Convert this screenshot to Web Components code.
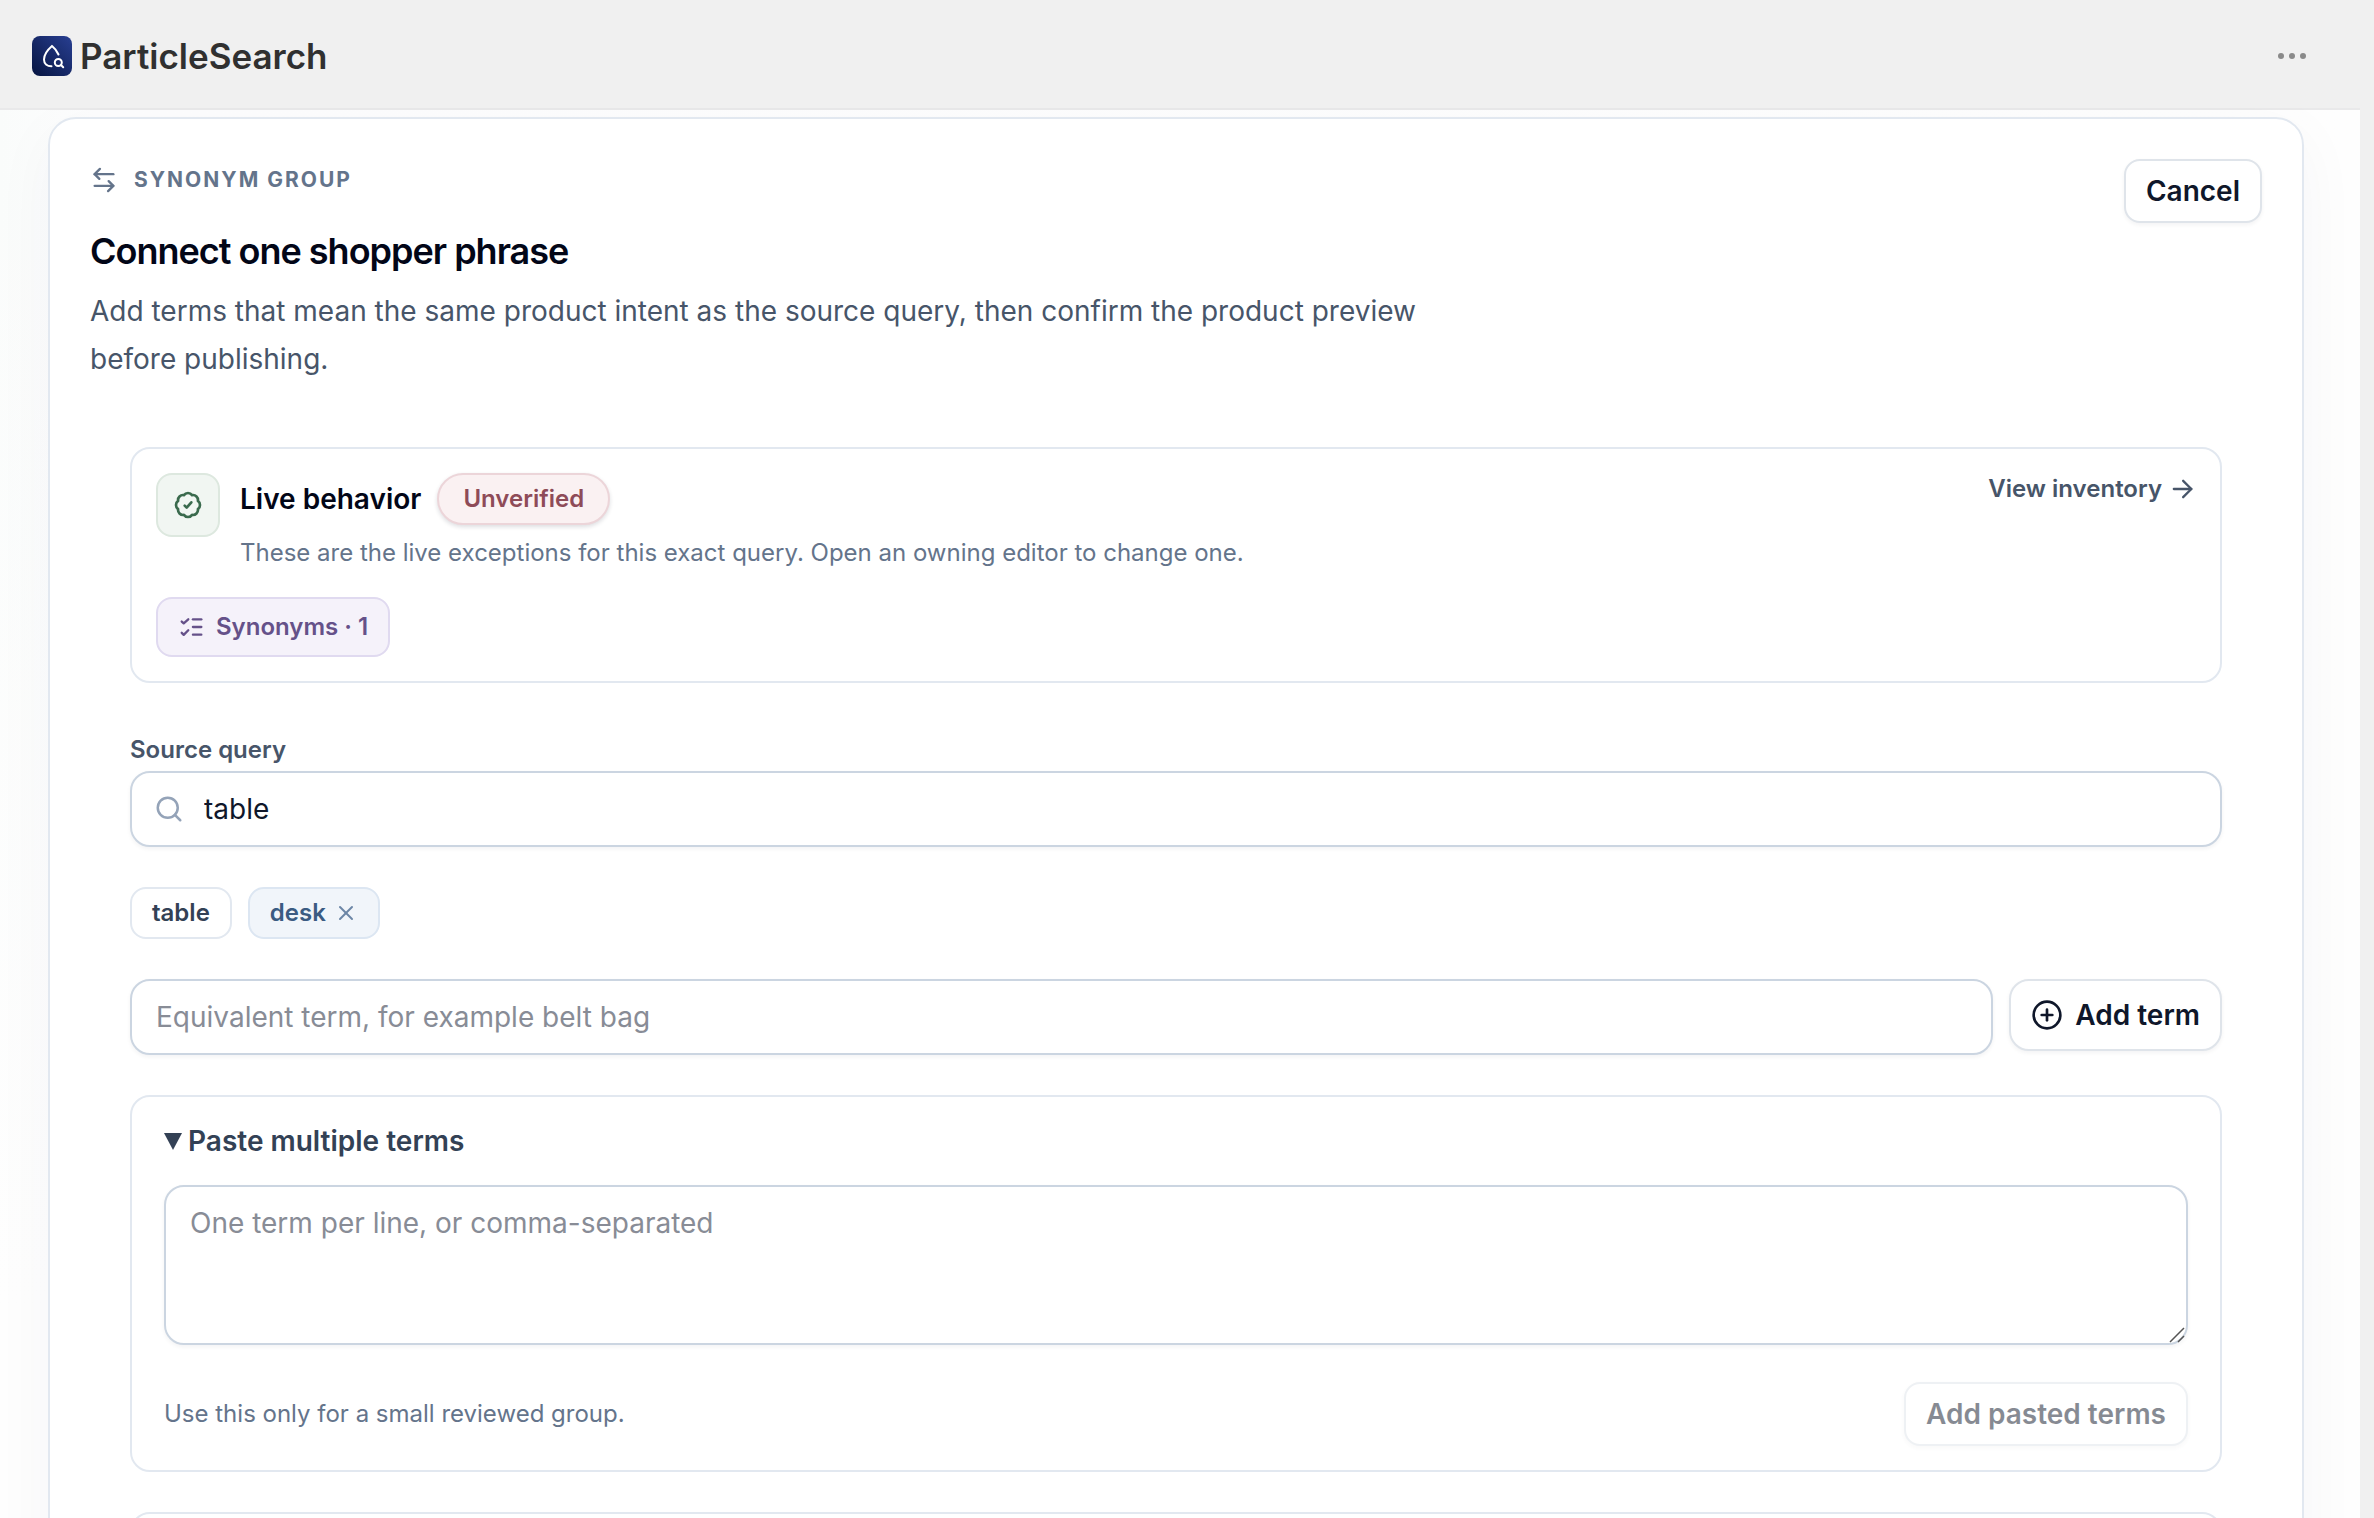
<!DOCTYPE html>
<html lang="en">
<head>
<meta charset="utf-8">
<title>ParticleSearch</title>
<style>
    html { background: #f0f0f0; }
    body {
        margin: 0;
        min-height: 100vh;
        overflow: hidden;
        font-family: Inter, "Liberation Sans", sans-serif;
        font-size: 28px;
        color: #0f172a;
        --line: #e2e8f0;
        --field-line: #cbd5e1;
        --muted: #64748b;
        --body: #475569;
        --strong: #334155;
    }
</style>
</head>
<body>
<app-shell>
    <synonym-editor></synonym-editor>
</app-shell>

<script>
const ICONS = {
    swap: '<path d="M8.500 2.500 4 7l4 4"/><path d="M4 7h16"/><path d="m15.500 21.500 4.500-4.500-4-4"/><path d="M20 17H4"/>',
    badge: '<path d="M21 12c0 1.268-.63 2.39-1.593 3.068a3.745 3.745 0 0 1-1.043 3.296 3.745 3.745 0 0 1-3.296 1.043A3.745 3.745 0 0 1 12 21c-1.268 0-2.39-.63-3.068-1.593a3.746 3.746 0 0 1-3.296-1.043 3.745 3.745 0 0 1-1.043-3.296A3.745 3.745 0 0 1 3 12c0-1.268.63-2.39 1.593-3.068a3.745 3.745 0 0 1 1.043-3.296 3.746 3.746 0 0 1 3.296-1.043A3.746 3.746 0 0 1 12 3c1.268 0 2.39.63 3.068 1.593a3.746 3.746 0 0 1 3.296 1.043 3.746 3.746 0 0 1 1.043 3.296A3.745 3.745 0 0 1 21 12Z"/><path d="m9.500 12.500 1.500 1.500 3.500-4"/>',
    arrow: '<path d="M5 12h15"/><path d="m13 5 7 7-7 7"/>',
    checks: '<path d="m3.200 7.300 1.700 1.500L8.800 5.400"/><path d="m3.200 17 1.700 1.700 3.900-3.900"/><path d="M12.800 5.400h7.200"/><path d="M12.800 12h7.200"/><path d="M12.800 18.600h7.200"/>',
    search: '<circle cx="11" cy="11" r="8"/><path d="m21 21-4.3-4.3"/>',
    close: '<path d="M18 6 6 18"/><path d="m6 6 12 12"/>',
    plus: '<circle cx="12" cy="12" r="10"/><path d="M8 12h8"/><path d="M12 8v8"/>'
};

function define(name, html) {
    const template = document.createElement('template');
    template.innerHTML = html;
    customElements.define(name, class extends HTMLElement {
        constructor() {
            super();
            this.attachShadow({ mode: 'open' }).appendChild(template.content.cloneNode(true));
        }
    });
}

class UiIcon extends HTMLElement {
    constructor() {
        super();
        this.attachShadow({ mode: 'open' });
    }
    connectedCallback() {
        const size = this.getAttribute('size') || 28;
        this.shadowRoot.innerHTML = `
            <style>
                :host { display: block; flex: none; }
                svg { display: block; }
            </style>
            <svg width="${size}" height="${size}" viewBox="0 0 24 24" fill="none" stroke="currentColor"
                stroke-width="2" stroke-linecap="round" stroke-linejoin="round" aria-hidden="true">
                ${ICONS[this.getAttribute('name')]}
            </svg>`;
    }
}
customElements.define('ui-icon', UiIcon);

class UiButton extends HTMLElement {
    constructor() {
        super();
        this.attachShadow({ mode: 'open' });
        this.shadowRoot.innerHTML = `
            <style>
                :host { display: block; flex: none; }
                button {
                    display: flex;
                    align-items: center;
                    gap: 12px;
                    height: 64px;
                    padding: 0 20px;
                    border: 2px solid #dfe4ea;
                    border-radius: 16px;
                    background: #fff;
                    box-shadow: 0 2px 4px rgba(15, 23, 42, 0.05);
                    font: 600 28px/40px Inter, sans-serif;
                    color: #0f172a;
                    white-space: nowrap;
                }
                :host([large]) button { height: 72px; border-radius: 20px; }
                button:disabled { opacity: 0.5; }
            </style>
            <button type="button"><slot></slot></button>`;
        this.shadowRoot.querySelector('button').disabled = this.hasAttribute('disabled');
    }
}
customElements.define('ui-button', UiButton);

define('ui-panel', `
    <style>
        :host {
            display: block;
            border: 2px solid var(--line);
            border-radius: 20px;
            padding: 24px;
            background: #fff;
        }
    </style>
    <slot></slot>
`);

define('ui-badge', `
    <style>
        :host {
            display: block;
            border: 2px solid #ecd5d9;
            border-radius: 26px;
            padding: 0 24px;
            background: #faf1f2;
            color: #8e4b58;
            font-size: 24px;
            font-weight: 600;
            line-height: 48px;
            box-shadow: 0 2px 4px rgba(15, 23, 42, 0.14);
        }
    </style>
    <slot></slot>
`);

define('term-chip', `
    <style>
        :host {
            display: flex;
            align-items: center;
            gap: 8px;
            border: 2px solid var(--line);
            border-radius: 16px;
            padding: 0 20px;
            background: #fff;
            color: var(--strong);
            font-size: 24px;
            font-weight: 600;
            line-height: 48px;
        }
        :host([tone="blue"]) {
            border-color: #dce6f2;
            background: #f1f5fa;
            color: #3b5b82;
        }
        :host([tone="violet"]) {
            gap: 10px;
            border-color: #e0daf0;
            background: #f5f2fa;
            color: #655189;
            line-height: 56px;
        }
    </style>
    <slot></slot>
`);

define('app-header', `
    <style>
        :host {
            display: flex;
            align-items: center;
            justify-content: space-between;
            height: 108px;
            box-sizing: border-box;
            padding: 4px 67px 0 32px;
            background: #f0f0f0;
        }
        .brand {
            display: flex;
            align-items: center;
            gap: 8px;
            color: #303030;
            font-size: 35px;
            font-weight: 600;
            line-height: 48px;
            text-decoration: none;
        }
        svg { display: block; }
        button {
            border: 0;
            padding: 0;
            background: none;
            color: #8a8a8a;
        }
    </style>
    <a class="brand" href="#">
        <svg width="40" height="40" viewBox="0 0 40 40" aria-hidden="true">
            <defs>
                <linearGradient id="tile" x1="0" y1="1" x2="1" y2="0">
                    <stop offset="0" stop-color="#061440"/>
                    <stop offset="1" stop-color="#283f92"/>
                </linearGradient>
            </defs>
            <rect width="40" height="40" rx="8" fill="url(#tile)"/>
            <g fill="none" stroke="#fff" stroke-width="2" stroke-linecap="round">
                <path d="M26.500 18.500C25 15 22.500 12 20 10C16 13.500 12 18.500 12 23.500C12 27.500 15 30.300 19.500 30.300"/>
                <circle cx="26.300" cy="26.500" r="3.500"/>
                <path d="m29 29 2.200 2.200"/>
            </g>
        </svg>
        <span>ParticleSearch</span>
    </a>
    <button type="button" aria-label="More actions">
        <svg width="30" height="8" viewBox="0 0 30 8" fill="currentColor">
            <circle cx="4" cy="4" r="3"/><circle cx="15" cy="4" r="3"/><circle cx="26" cy="4" r="3"/>
        </svg>
    </button>
`);

define('app-shell', `
    <style>
        :host { display: block; }
        app-header { position: relative; z-index: 1; }
        main {
            margin-right: 14px;
            padding: 7px 56px 0 48px;
            border-top: 2px solid #e9e9ea;
            background:
                linear-gradient(180deg, transparent, #fefefe 1200px),
                linear-gradient(90deg, #fafcfb, #fdfdfe 96px, #fefefe);
        }
    </style>
    <app-header></app-header>
    <main><slot></slot></main>
`);

define('live-behavior', `
    <style>
        :host { display: block; }
        .top { display: flex; align-items: flex-start; gap: 20px; }
        .tile {
            flex: none;
            display: grid;
            place-items: center;
            width: 60px;
            height: 60px;
            border: 2px solid #dde8df;
            border-radius: 16px;
            background: #f1f6f2;
            color: #3a6a4d;
        }
        .text { flex: 1; }
        .heading { display: flex; align-items: center; gap: 16px; }
        h3 { margin: 0; font-size: 28px; font-weight: 600; line-height: 40px; color: #020617; }
        p { margin: 8px 0 0; font-size: 24px; line-height: 40px; color: var(--muted); }
        a {
            display: flex;
            align-items: center;
            gap: 6px;
            font-size: 24px;
            font-weight: 600;
            line-height: 32px;
            color: var(--body);
            text-decoration: none;
        }
        .chips { display: flex; margin-top: 24px; }
    </style>
    <ui-panel>
        <div class="top">
            <span class="tile"><ui-icon name="badge" size="32"></ui-icon></span>
            <div class="text">
                <div class="heading"><h3>Live behavior</h3><ui-badge>Unverified</ui-badge></div>
                <p>These are the live exceptions for this exact query. Open an owning editor to change one.</p>
            </div>
            <a href="#">View inventory <ui-icon name="arrow"></ui-icon></a>
        </div>
        <div class="chips">
            <term-chip tone="violet"><ui-icon name="checks"></ui-icon>Synonyms · 1</term-chip>
        </div>
    </ui-panel>
`);

define('synonym-form', `
    <style>
        :host { display: flex; flex-direction: column; gap: 40px; }
        input, textarea {
            box-sizing: border-box;
            width: 100%;
            border: 2px solid var(--field-line);
            border-radius: 20px;
            background: #fff;
            box-shadow: 0 2px 4px rgba(15, 23, 42, 0.05);
            color: #0f172a;
            font: 400 28px/40px Inter, sans-serif;
        }
        input { height: 76px; padding: 0 24px; }
        textarea { display: block; height: 160px; padding: 16px 24px; resize: none; }
        ::placeholder { color: #888c96; opacity: 1; }
        .field label {
            display: block;
            padding: 8px 0 2px;
            font-size: 24px;
            font-weight: 600;
            line-height: 38px;
            color: var(--body);
        }
        .search, .paste { display: grid; align-items: center; }
        .search > *, .paste > * { grid-area: 1 / 1; }
        .search ui-icon { z-index: 1; margin-left: 24px; color: #94a3b8; justify-self: start; }
        .search input { padding-left: 72px; }
        .chips { display: flex; gap: 16px; }
        .remove { border: 0; padding: 0; background: none; color: #6c86a6; }
        .add { display: flex; align-items: flex-start; gap: 16px; }
        .add input { flex: 1; min-width: 0; }
        details { padding: 0 8px; }
        summary {
            display: flex;
            align-items: center;
            gap: 6px;
            font-weight: 600;
            line-height: 40px;
            color: var(--strong);
            list-style: none;
        }
        .paste { margin-top: 24px; }
        .grip { align-self: end; justify-self: end; z-index: 1; margin: 0 3px 2px 0; }
        .foot { display: flex; align-items: center; justify-content: space-between; margin-top: 37px; }
        .foot p { margin: 0; font-size: 24px; line-height: 40px; color: var(--muted); }
        .next { height: 160px; }
    </style>
    <div class="field">
        <label for="source">Source query</label>
        <div class="search">
            <ui-icon name="search" size="30"></ui-icon>
            <input id="source" type="text" value="table">
        </div>
    </div>
    <div class="chips">
        <term-chip>table</term-chip>
        <term-chip tone="blue">desk<button class="remove" type="button" aria-label="Remove desk"><ui-icon name="close" size="24"></ui-icon></button></term-chip>
    </div>
    <div class="add">
        <input type="text" aria-label="Equivalent term" placeholder="Equivalent term, for example belt bag">
        <ui-button large><ui-icon name="plus" size="32"></ui-icon>Add term</ui-button>
    </div>
    <ui-panel>
        <details open>
            <summary>
                <svg width="18" height="20" viewBox="0 0 18 20" fill="currentColor" aria-hidden="true"><path d="M0 2h18L9 19z"/></svg>
                Paste multiple terms
            </summary>
            <div class="paste">
                <textarea aria-label="Paste multiple terms" placeholder="One term per line, or comma-separated"></textarea>
                <svg class="grip" width="16" height="16" viewBox="0 0 16 16" stroke="#555" stroke-width="1.500" aria-hidden="true"><path d="M1 15 15 1M9 15l6-6"/></svg>
            </div>
            <div class="foot">
                <p>Use this only for a small reviewed group.</p>
                <ui-button disabled>Add pasted terms</ui-button>
            </div>
        </details>
    </ui-panel>
    <ui-panel class="next"></ui-panel>
`);

define('synonym-editor', `
    <style>
        :host {
            display: block;
            border: 2px solid var(--line);
            border-radius: 28px;
            padding: 40px;
            background: #fff;
            box-shadow: 0 16px 64px rgba(30, 41, 82, 0.04);
        }
        header { display: flex; align-items: flex-start; justify-content: space-between; }
        .eyebrow {
            display: flex;
            align-items: center;
            gap: 16px;
            margin: 0 0 26px;
            font-size: 21px;
            font-weight: 700;
            line-height: 42px;
            letter-spacing: 2px;
            text-transform: uppercase;
            color: var(--muted);
        }
        h2 { margin: 0; font-size: 36px; font-weight: 600; line-height: 48px; letter-spacing: -1px; color: #020617; }
        .lead { max-width: 1344px; margin: 12px 0 64px; line-height: 48px; color: var(--body); }
        .content { display: flex; flex-direction: column; gap: 40px; padding: 0 40px; }
    </style>
    <header>
        <div>
            <p class="eyebrow"><ui-icon name="swap"></ui-icon>Synonym group</p>
            <h2>Connect one shopper phrase</h2>
            <p class="lead">Add terms that mean the same product intent as the source query, then confirm the product preview before publishing.</p>
        </div>
        <ui-button>Cancel</ui-button>
    </header>
    <div class="content">
        <live-behavior></live-behavior>
        <synonym-form></synonym-form>
    </div>
`);
</script>
</body>
</html>
